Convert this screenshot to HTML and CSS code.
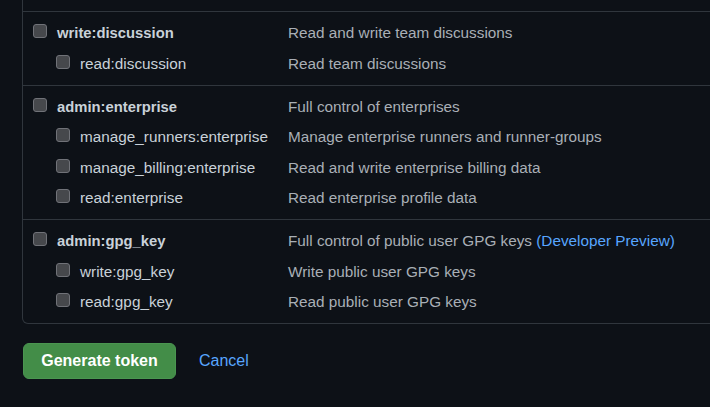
FILE: index.html
```html
<!DOCTYPE html>
<html lang="en">
<head>
<meta charset="utf-8">
<title>Scopes</title>
<link rel="stylesheet" href="styles.css">
</head>
<body>
<div class="page">
  <div class="scopes">
    <div class="scope-tail"></div>

    <div class="scope-group">
      <div class="scope-row parent">
        <label class="scope-label"><input type="checkbox" class="cb"><span>write:discussion</span></label>
        <span class="scope-desc">Read and write team discussions</span>
      </div>
      <div class="scope-row child">
        <label class="scope-label"><input type="checkbox" class="cb"><span>read:discussion</span></label>
        <span class="scope-desc">Read team discussions</span>
      </div>
    </div>

    <div class="scope-group">
      <div class="scope-row parent">
        <label class="scope-label"><input type="checkbox" class="cb"><span>admin:enterprise</span></label>
        <span class="scope-desc">Full control of enterprises</span>
      </div>
      <div class="scope-row child">
        <label class="scope-label"><input type="checkbox" class="cb"><span>manage_runners:enterprise</span></label>
        <span class="scope-desc">Manage enterprise runners and runner-groups</span>
      </div>
      <div class="scope-row child">
        <label class="scope-label"><input type="checkbox" class="cb"><span>manage_billing:enterprise</span></label>
        <span class="scope-desc">Read and write enterprise billing data</span>
      </div>
      <div class="scope-row child">
        <label class="scope-label"><input type="checkbox" class="cb"><span>read:enterprise</span></label>
        <span class="scope-desc">Read enterprise profile data</span>
      </div>
    </div>

    <div class="scope-group">
      <div class="scope-row parent">
        <label class="scope-label"><input type="checkbox" class="cb"><span>admin:gpg_key</span></label>
        <span class="scope-desc">Full control of public user GPG keys <a class="link" href="#">(Developer Preview)</a></span>
      </div>
      <div class="scope-row child">
        <label class="scope-label"><input type="checkbox" class="cb"><span>write:gpg_key</span></label>
        <span class="scope-desc">Write public user GPG keys</span>
      </div>
      <div class="scope-row child">
        <label class="scope-label"><input type="checkbox" class="cb"><span>read:gpg_key</span></label>
        <span class="scope-desc">Read public user GPG keys</span>
      </div>
    </div>
  </div>

  <div class="actions">
    <button class="btn-primary" type="button">Generate token</button>
    <a class="link cancel" href="#">Cancel</a>
  </div>
</div>
</body>
</html>
```

FILE: styles.css
```css
html, body {
  margin: 0;
  padding: 0;
  background: #0d1117;
}

body {
  font-family: "Liberation Sans", Arial, sans-serif;
  font-size: 15.3px;
  color: #c9d1d9;
}

.page {
  box-sizing: border-box;
  width: 710px;
  height: 407px;
  padding-left: 22px;
  overflow: hidden;
}

.scopes {
  width: calc(100% + 20px);
  border: 1px solid #30363d;
  border-top: 0;
  border-radius: 0 0 6px 6px;
}

.scope-tail {
  height: 11px;
}

.scope-group {
  border-top: 1px solid #30363d;
  padding: 6px 0 5.5px 10px;
}

.scope-row {
  display: grid;
  grid-template-columns: 255px 1fr;
  height: 30.5px;
  align-items: center;
}

.scope-label {
  display: flex;
  align-items: center;
  gap: 10px;
  white-space: nowrap;
}

.parent .scope-label {
  font-weight: bold;
  font-size: 14.8px;
}

.child .scope-label {
  padding-left: 23px;
}

.cb {
  appearance: none;
  -webkit-appearance: none;
  margin: 0 0 4px 0;
  width: 14px;
  height: 14px;
  flex: none;
  box-sizing: border-box;
  background: #46484c;
  border: 1px solid #707278;
  border-radius: 3px;
}

.scope-desc {
  white-space: nowrap;
  color: #a9afb6;
}

.link {
  color: #58a6ff;
  text-decoration: none;
}

.actions {
  display: flex;
  align-items: center;
  gap: 23px;
  padding: 19px 0 0 1px;
}

.btn-primary {
  font-family: "Liberation Sans", Arial, sans-serif;
  font-size: 16px;
  font-weight: bold;
  color: #ffffff;
  background: #438d48;
  border: 1px solid #4a9550;
  border-radius: 6px;
  width: 153px;
  height: 36px;
  padding: 0;
}

.cancel {
  font-size: 16px;
}
```
